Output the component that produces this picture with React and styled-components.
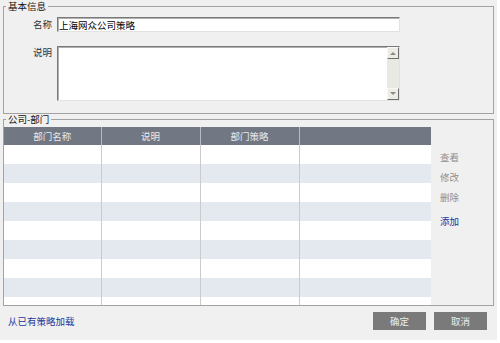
import React from 'react';
import styled, { createGlobalStyle } from 'styled-components';

const Global = createGlobalStyle`
  body {
    margin: 0;
    background: #ffffff;
    font-family: "Noto Sans CJK SC", "Noto Sans", sans-serif;
  }
`;

const Page = styled.div`
  box-sizing: border-box;
  width: 497px;
  height: 340px;
  padding-top: 1px;
  background: #f0f0f0;
  display: flex;
  flex-direction: column;
  font-size: 9.5px;
  color: #222;
`;

const Group = styled.fieldset`
  margin: 0 3px 0 3px;
  padding: ${p => p.$pad || '0'};
  border: 1px solid #a2a2a2;
  min-width: 0;
`;

const Legend = styled.legend`
  margin-left: 2px;
  padding: 0 2px;
  font-size: 9.5px;
  line-height: 11px;
  color: #111;
`;

const FormGrid = styled.div`
  display: grid;
  grid-template-columns: 48px 343px;
  column-gap: 5px;
  row-gap: 14px;
`;

const Label = styled.div`
  text-align: right;
  line-height: ${p => (p.$top ? '12px' : '15px')};
  color: #333;
`;

const TextInput = styled.input`
  box-sizing: border-box;
  height: 15px;
  width: 343px;
  margin: 0;
  padding: 0 1px;
  font: inherit;
  font-size: 9.5px;
  color: #000;
  background: #fff;
  border: 1px solid;
  border-color: #7a7a7a #e2e2e2 #e2e2e2 #7a7a7a;
  box-shadow: inset 1px 1px 0 #b0b0b0;
  outline: none;
`;

const AreaBox = styled.div`
  box-sizing: border-box;
  height: 55px;
  display: flex;
  background: #fff;
  border: 1px solid;
  border-color: #7a7a7a #e2e2e2 #e2e2e2 #7a7a7a;
  box-shadow: inset 1px 1px 0 #b0b0b0;
`;

const Area = styled.textarea`
  flex: 1;
  border: none;
  resize: none;
  outline: none;
  background: transparent;
  font: inherit;
  margin: 1px 0 0 1px;
  padding: 1px;
  overflow: hidden;
`;

const ScrollBar = styled.div`
  width: 12px;
  display: flex;
  flex-direction: column;
  justify-content: space-between;
  background: #e9e9e4;
`;

const ScrollBtn = styled.div`
  height: 12px;
  box-sizing: border-box;
  display: flex;
  align-items: center;
  justify-content: center;
  background: #ecebe6;
  border: 1px solid;
  border-color: #f8f8f6 #6e6e6e #6e6e6e #f8f8f6;
`;

const Arrow = ({ down }) => (
  <svg width="6" height="4" viewBox="0 0 6 4">
    <path d={down ? 'M0 0 H6 L3 3 Z' : 'M0 4 H6 L3 1 Z'} fill="#8a8a8a" />
  </svg>
);

const DeptBody = styled.div`
  display: flex;
`;

const TableWrap = styled.div`
  width: 427px;
  height: 178px;
  overflow: hidden;
`;

const Table = styled.table`
  width: 427px;
  border-collapse: collapse;
  table-layout: fixed;
`;

const Th = styled.th`
  height: 18px;
  padding: 0;
  background: #717883;
  color: #e8eaee;
  font-weight: normal;
  font-size: 9.5px;
  text-align: center;
  border-right: 1px solid #b7bcc4;
  &:last-child {
    border-right: none;
  }
`;

const Td = styled.td`
  height: 19px;
  padding: 0;
  background: ${p => (p.$alt ? '#e4e9f0' : '#ffffff')};
  border-right: 1px solid #cbcbcb;
  &:last-child {
    border-right: none;
  }
`;

const Actions = styled.div`
  display: flex;
  flex-direction: column;
  padding: 20px 0 0 9px;
`;

const Action = styled.div`
  line-height: 20px;
  margin-top: ${p => (p.$primary ? '4px' : '0')};
  color: ${p => (p.$primary ? '#1c2f9a' : '#8e8e8e')};
`;

const Footer = styled.div`
  display: flex;
  justify-content: space-between;
  align-items: flex-start;
  padding: 6px 10px 0 8px;
`;

const Link = styled.div`
  line-height: 18px;
  color: #24369a;
`;

const Buttons = styled.div`
  display: flex;
  gap: 8px;
`;

const Button = styled.div`
  width: 53px;
  height: 18px;
  line-height: 18px;
  text-align: center;
  background: #7a7a7a;
  color: #eeeeee;
`;

const columns = ['部门名称', '说明', '部门策略', ''];
const widths = [97, 99, 99, 132];

export default function App() {
  const rows = Array.from({ length: 9 }, (_, i) => i);
  return (
    <Page>
      <Global />
      <Group $pad="5px 0 12px 0">
        <Legend>基本信息</Legend>
        <FormGrid>
          <Label>名称</Label>
          <TextInput defaultValue="上海网众公司策略" />
          <Label $top>说明</Label>
          <AreaBox>
            <Area />
            <ScrollBar>
              <ScrollBtn><Arrow /></ScrollBtn>
              <ScrollBtn><Arrow down /></ScrollBtn>
            </ScrollBar>
          </AreaBox>
        </FormGrid>
      </Group>
      <Group $pad="2px 0 0 0">
        <Legend>公司-部门</Legend>
        <DeptBody>
          <TableWrap>
            <Table>
              <colgroup>
                {widths.map((w, i) => <col key={i} style={{ width: w }} />)}
              </colgroup>
              <thead>
                <tr>
                  {columns.map((c, i) => <Th key={i}>{c}</Th>)}
                </tr>
              </thead>
              <tbody>
                {rows.map(r => (
                  <tr key={r}>
                    {columns.map((_, i) => <Td key={i} $alt={r % 2 === 1} />)}
                  </tr>
                ))}
              </tbody>
            </Table>
          </TableWrap>
          <Actions>
            <Action>查看</Action>
            <Action>修改</Action>
            <Action>删除</Action>
            <Action $primary>添加</Action>
          </Actions>
        </DeptBody>
      </Group>
      <Footer>
        <Link>从已有策略加载</Link>
        <Buttons>
          <Button>确定</Button>
          <Button>取消</Button>
        </Buttons>
      </Footer>
    </Page>
  );
}
